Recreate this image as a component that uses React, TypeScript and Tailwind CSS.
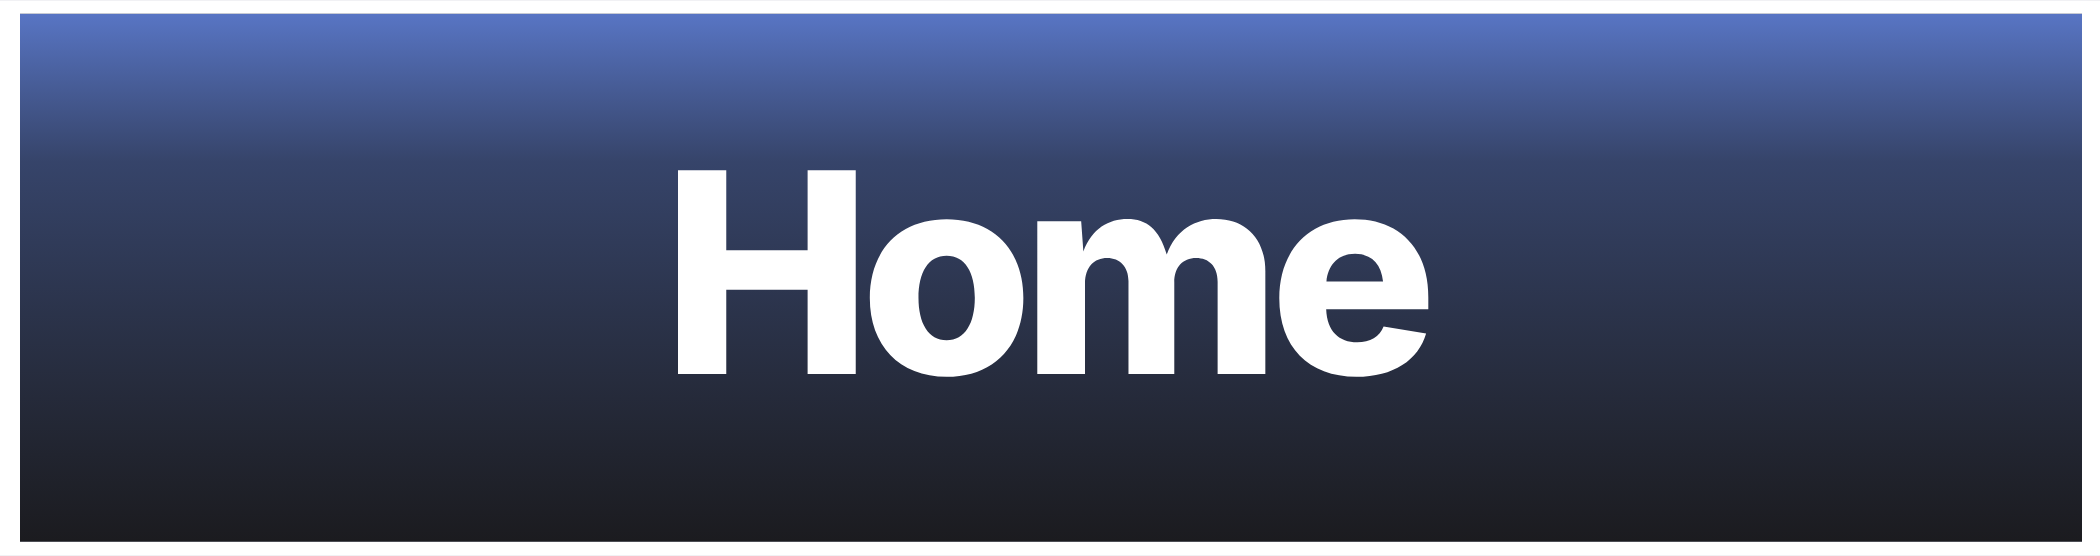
export default function App() {
  return (
    <div className="w-full h-[556px] bg-white border-y border-[#f1f1f4] pt-3 pb-[13px] pl-5 pr-[18px]">
      {/* Hero banner */}
      <section className="h-full flex items-center justify-center border-t border-[#c7cad3] border-b border-b-[#4d4e55] bg-linear-to-b from-[#5875c4] via-[#36446a] via-[28%] to-[#1b1b1f]">
        <h1 className="font-['Inter',sans-serif] text-white text-[280px] font-extrabold leading-none tracking-[-0.042em] pb-[10px] pr-[14px]">
          Home
        </h1>
      </section>
    </div>
  );
}
